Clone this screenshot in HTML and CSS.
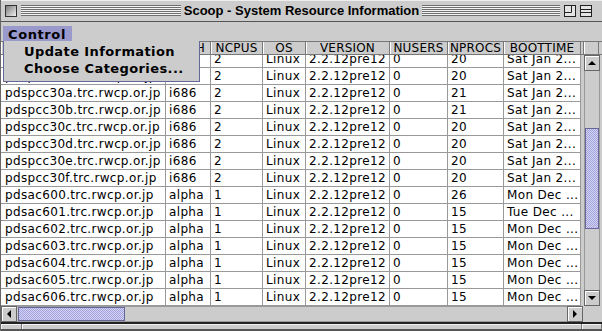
FILE: index.html
```html
<!DOCTYPE html>
<html lang="en">
<head>
    <meta charset="UTF-8">
    <title>Scoop - System Resource Information</title>
    <link rel="stylesheet" href="styles.css">
</head>
<body>

<div class="window">
    <div class="titlebar">
        <div class="title-side left">
            <span class="close-box"></span>
            <span class="stripes"></span>
        </div>
        <span class="title">Scoop - System Resource Information</span>
        <div class="title-side right">
            <span class="stripes"></span>
            <svg class="title-btn" width="12" height="12" viewBox="0 0 12 12">
                <rect x="0.5" y="0.5" width="11" height="11" fill="#e4e4e4" stroke="#222"/>
                <path d="M0.5 7.5H7.5V0.5" fill="none" stroke="#222"/>
            </svg>
            <svg class="title-btn" width="12" height="12" viewBox="0 0 12 12">
                <rect x="0.5" y="0.5" width="11" height="11" fill="#e4e4e4" stroke="#222"/>
                <path d="M1 4.5H11M1 7.5H11" fill="none" stroke="#222"/>
            </svg>
        </div>
    </div>

    <div class="menubar">
        <span class="menu-item open">Control</span>
        <ul class="popup">
            <li>Update Information</li>
            <li>Choose Categories...</li>
        </ul>
    </div>

    <div class="pane">
        <div class="pane-top">
            <div class="viewport">
                <div class="row head">
                    <span>HOSTNAME</span><span>ARCH</span><span>NCPUS</span><span>OS</span>
                    <span>VERSION</span><span>NUSERS</span><span>NPROCS</span><span>BOOTTIME</span>
                </div>
                <div class="body">
                    <div class="rows" id="rows"></div>
                </div>
            </div>
            <div class="side">
                <div class="corner-head"><span class="corner-cell"></span></div>
                <div class="vscroll">
                    <span class="btn up"></span>
                    <span class="track"><span class="thumb"></span></span>
                    <span class="btn down"></span>
                </div>
            </div>
        </div>
        <div class="pane-bottom">
            <div class="hscroll">
                <span class="btn left"></span>
                <span class="track"><span class="thumb"></span></span>
                <span class="btn right"></span>
            </div>
            <div class="corner"></div>
        </div>
    </div>

    <div class="statusbar">
        <span class="seg first"></span>
        <span class="seg mid"></span>
        <span class="seg last"></span>
    </div>
</div>

<script>
    const hosts = [
        ['pdspcc29e.trc.rwcp.or.jp', 'i686', '2', '20', 'Sat Jan 2...'],
        ['pdspcc29f.trc.rwcp.or.jp', 'i686', '2', '20', 'Sat Jan 2...'],
        ['pdspcc30a.trc.rwcp.or.jp', 'i686', '2', '21', 'Sat Jan 2...'],
        ['pdspcc30b.trc.rwcp.or.jp', 'i686', '2', '21', 'Sat Jan 2...'],
        ['pdspcc30c.trc.rwcp.or.jp', 'i686', '2', '20', 'Sat Jan 2...'],
        ['pdspcc30d.trc.rwcp.or.jp', 'i686', '2', '20', 'Sat Jan 2...'],
        ['pdspcc30e.trc.rwcp.or.jp', 'i686', '2', '20', 'Sat Jan 2...'],
        ['pdspcc30f.trc.rwcp.or.jp', 'i686', '2', '20', 'Sat Jan 2...'],
        ['pdsac600.trc.rwcp.or.jp', 'alpha', '1', '26', 'Mon Dec ...'],
        ['pdsac601.trc.rwcp.or.jp', 'alpha', '1', '15', 'Tue Dec ...'],
        ['pdsac602.trc.rwcp.or.jp', 'alpha', '1', '15', 'Mon Dec ...'],
        ['pdsac603.trc.rwcp.or.jp', 'alpha', '1', '15', 'Mon Dec ...'],
        ['pdsac604.trc.rwcp.or.jp', 'alpha', '1', '15', 'Mon Dec ...'],
        ['pdsac605.trc.rwcp.or.jp', 'alpha', '1', '15', 'Mon Dec ...'],
        ['pdsac606.trc.rwcp.or.jp', 'alpha', '1', '15', 'Mon Dec ...']
    ];

    const rows = document.getElementById('rows');
    hosts.forEach(h => {
        const row = document.createElement('div');
        row.className = 'row';
        const cells = [h[0], h[1], h[2], 'Linux', '2.2.12pre12', '0', h[3], h[4]];
        cells.forEach(text => {
            const cell = document.createElement('span');
            cell.textContent = text;
            row.appendChild(cell);
        });
        rows.appendChild(row);
    });
</script>

</body>
</html>
```

FILE: styles.css
```css
body {
    margin: 0;
    background: #cccccc;
    font-family: "DejaVu Sans", sans-serif;
    color: #000000;
}

.window {
    width: 602px;
    height: 331px;
    box-sizing: border-box;
    border-left: 1px solid #666666;
    background: #cccccc;
    display: flex;
    flex-direction: column;
    overflow: hidden;
}

/* title bar */

.titlebar {
    height: 22px;
    box-sizing: border-box;
    border-bottom: 1px solid #555555;
    display: grid;
    grid-template-columns: 1fr auto 1fr;
    align-items: center;
    background: #cdcdcd;
    box-shadow: inset 0 1px #eeeeee;
}

.title-side {
    display: flex;
    align-items: center;
    gap: 4px;
}

.title-side.left {
    padding-left: 4px;
}

.title-side.right {
    padding-right: 10px;
}

.close-box {
    width: 10px;
    height: 10px;
    border: 1px solid #333333;
    background: linear-gradient(135deg, #7a7a7a, #f0f0f0);
}

.stripes {
    flex: 1;
    height: 11px;
    background: repeating-linear-gradient(to bottom, #6e6e6e 0 1px, #f4f4f4 1px 2px);
}

.title-btn {
    display: block;
}

.title {
    font: bold 13px "Liberation Sans", Arial, sans-serif;
    padding: 0 3px;
}

/* menu */

.menubar {
    height: 19px;
    box-sizing: border-box;
    padding: 2px 0 0 2px;
    position: relative;
}

.menu-item {
    display: inline-block;
    height: 17px;
    line-height: 17px;
    padding: 0 6px 0 5px;
    font-size: 13px;
    font-weight: bold;
    letter-spacing: 0.6px;
}

.menu-item.open {
    background: #9999cc;
}

.popup {
    position: absolute;
    top: 19px;
    left: 2px;
    width: 195px;
    height: 38px;
    margin: 0;
    padding: 2px 0 0;
    box-sizing: content-box;
    list-style-type: none;
    background: #cccccc;
    border: 1px solid #666699;
    border-top-width: 0;
    z-index: 2;
}

.popup li {
    height: 17px;
    line-height: 17px;
    padding-left: 20px;
    font-size: 13px;
    font-weight: bold;
    letter-spacing: 0.4px;
}

/* table */

.pane-top,
.pane-bottom {
    display: flex;
}

.viewport {
    width: 580px;
}

.row {
    display: grid;
    grid-template-columns: 165px 45px 52px 43px 84px 58px 56px 77px;
}

.row span {
    box-sizing: border-box;
    white-space: nowrap;
    overflow: hidden;
}

.row.head {
    height: 14px;
    box-sizing: border-box;
    border-top: 1px solid #777777;
    border-bottom: 1px solid #777777;
    background: #cccccc;
}

.row.head span {
    border-right: 1px solid #777777;
    box-shadow: inset 1px 0 #ffffff;
    text-align: center;
    font-size: 12px;
    line-height: 12px;
    letter-spacing: 0.2px;
}

.body {
    height: 251px;
    overflow: hidden;
    background: #ffffff;
}

.rows {
    margin-top: -4px;
}

.rows .row {
    height: 17px;
}

.rows .row span {
    border-right: 1px solid #999999;
    border-bottom: 1px solid #999999;
    padding-left: 3px;
    font-size: 12px;
    line-height: 16px;
    letter-spacing: 0.35px;
}

.rows .row span:first-child {
    padding-left: 4px;
}

/* scrollbars */

.side {
    width: 21px;
}

.corner-head {
    height: 14px;
    box-sizing: border-box;
    border-top: 1px solid #777777;
    border-bottom: 1px solid #777777;
    padding-left: 2px;
}

.corner-cell {
    display: block;
    width: 16px;
    height: 12px;
    box-sizing: border-box;
    border-left: 1px solid #777777;
    border-right: 1px solid #777777;
    box-shadow: inset 1px 0 #ffffff;
}

.vscroll {
    margin-left: 3px;
    width: 16px;
    height: 251px;
    display: flex;
    flex-direction: column;
}

.hscroll {
    width: 582px;
    height: 16px;
    display: flex;
}

.corner {
    width: 19px;
    height: 16px;
}

.btn {
    flex: none;
    width: 16px;
    height: 16px;
    box-sizing: border-box;
    border: 1px solid #666666;
    box-shadow: inset 1px 1px #ffffff;
    background: #cccccc;
    display: flex;
    align-items: center;
    justify-content: center;
}

.btn::before {
    content: "";
    width: 0;
    height: 0;
    border: 4px solid transparent;
}

.btn.up::before {
    border-bottom-color: #000000;
    border-top-width: 0;
}

.btn.down::before {
    border-top-color: #000000;
    border-bottom-width: 0;
}

.btn.left::before {
    border-right-color: #000000;
    border-left-width: 0;
}

.btn.right::before {
    border-left-color: #000000;
    border-right-width: 0;
}

.track {
    flex: 1;
    display: flex;
    background: #cccccc;
}

.vscroll .track {
    flex-direction: column;
    border-left: 1px solid #999999;
    border-right: 1px solid #999999;
}

.hscroll .track {
    border-top: 1px solid #999999;
    border-bottom: 1px solid #999999;
}

.thumb {
    display: block;
    box-sizing: border-box;
    border: 1px solid #666699;
    background: repeating-conic-gradient(#a4a4d8 0 25%, #d2d2fa 0 50%) 0 0 / 2px 2px;
}

.vscroll .thumb {
    margin-top: 57px;
    height: 101px;
}

.hscroll .thumb {
    margin-left: 1px;
    width: 107px;
}

/* bottom edge */

.statusbar {
    height: 9px;
    box-sizing: border-box;
    border-top: 2px solid #222222;
    border-bottom: 2px solid #555555;
    display: flex;
}

.seg {
    border-right: 1px solid #777777;
    box-shadow: inset 1px 1px #f4f4f4;
}

.seg.first {
    width: 20px;
}

.seg.mid {
    flex: 1;
}

.seg.last {
    width: 19px;
}
```
